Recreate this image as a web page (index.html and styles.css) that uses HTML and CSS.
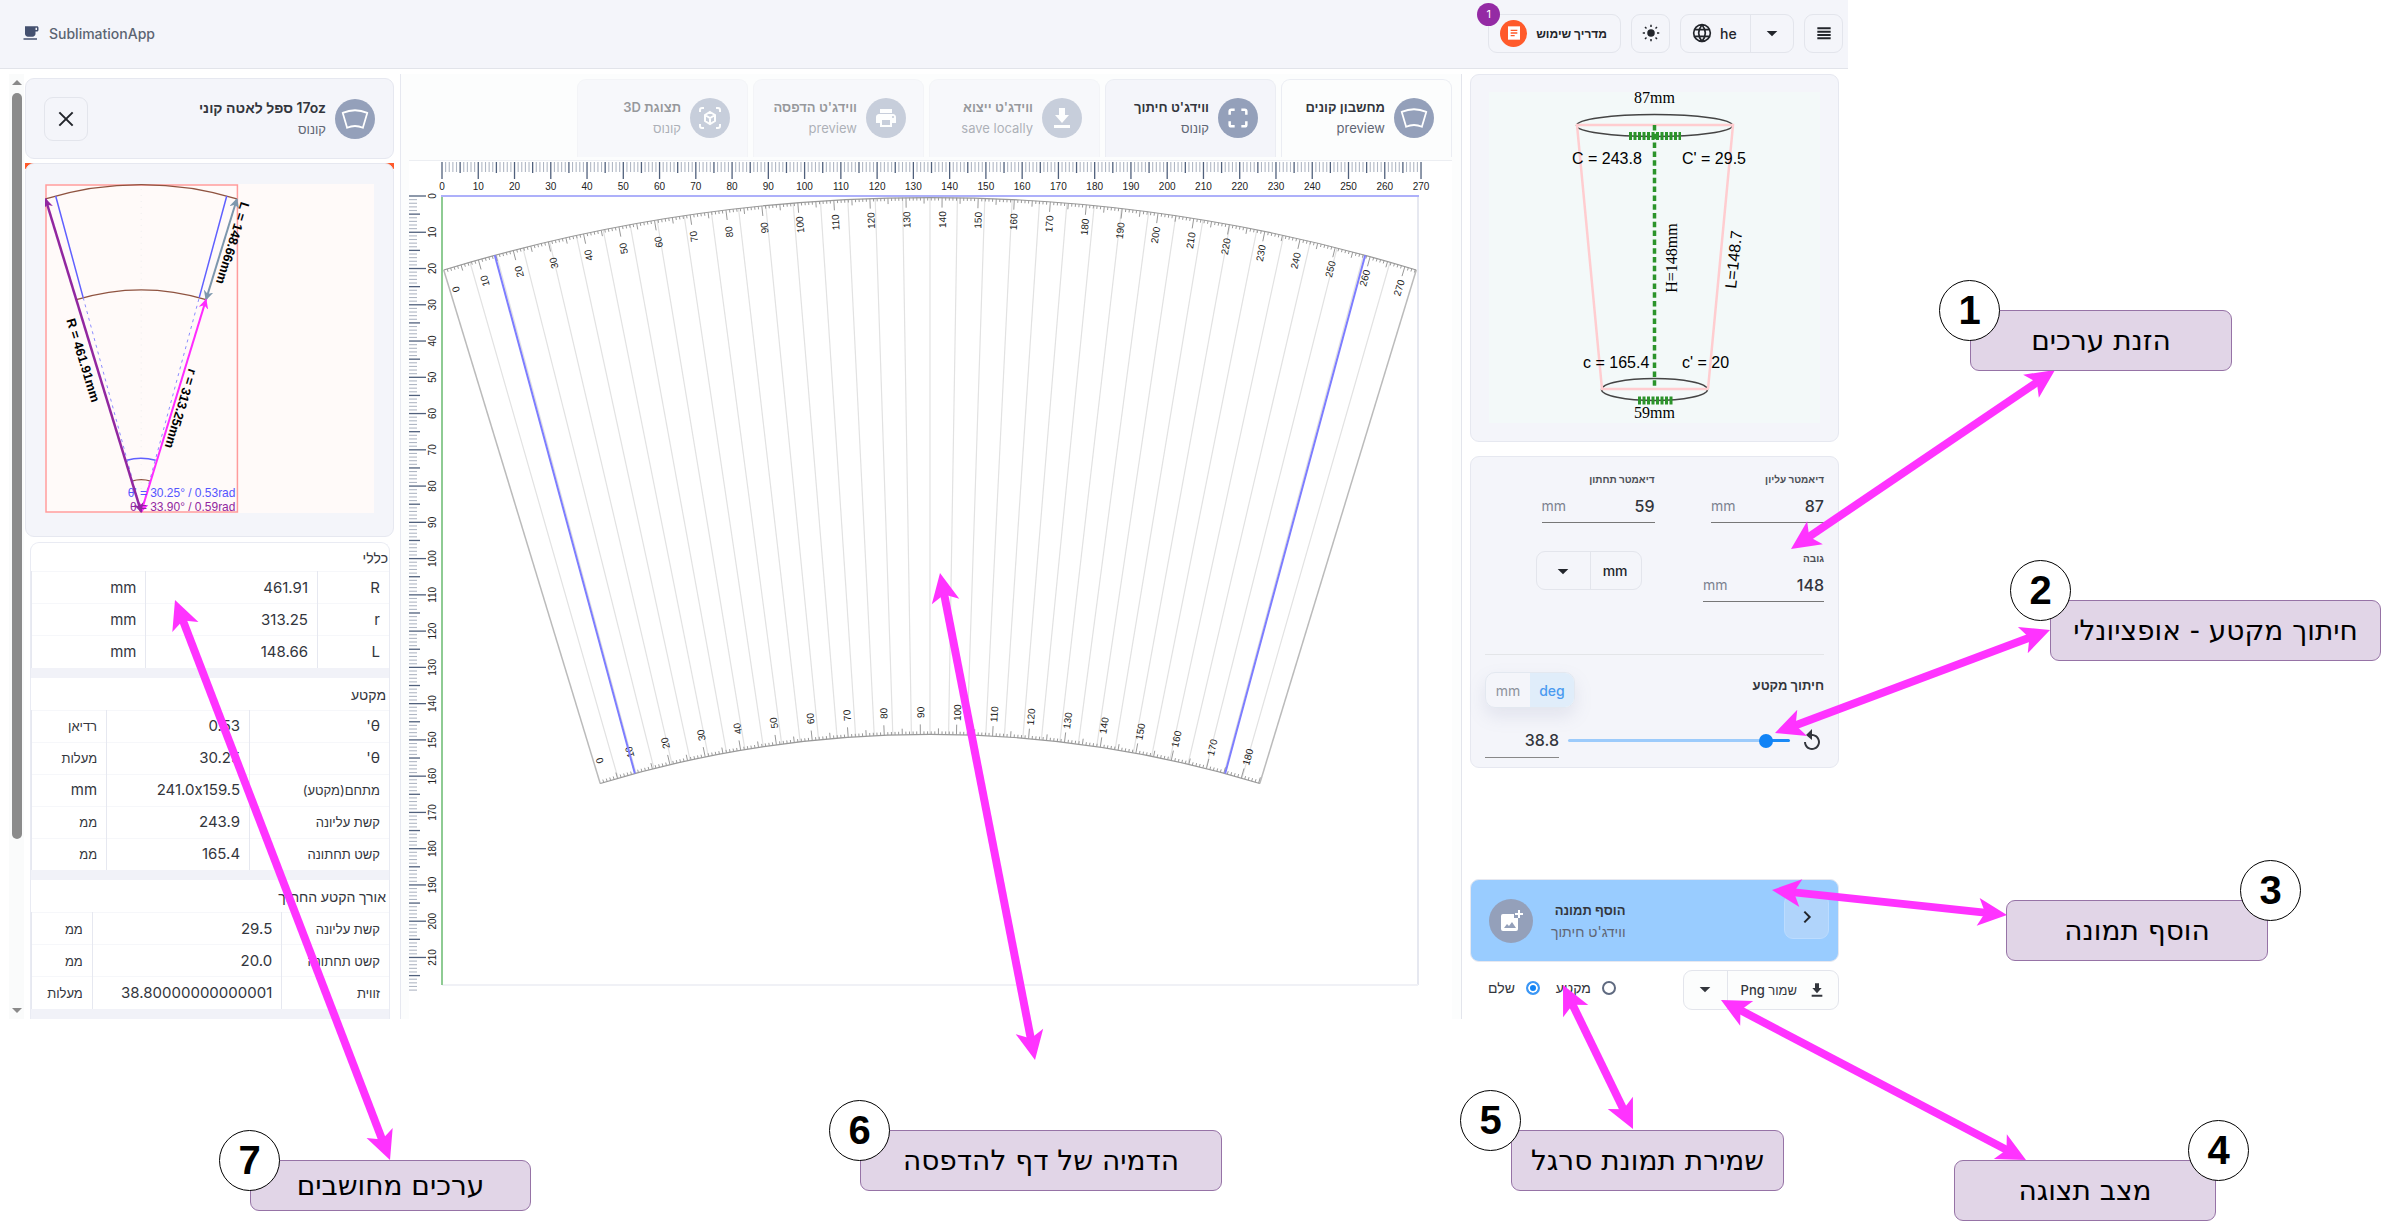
FILE: index.html
```html
<!DOCTYPE html>
<html lang="he">
<head>
    <meta charset="UTF-8">
    <meta name="viewport" content="width=device-width, initial-scale=1.0">
    <title>SublimationApp</title>
    <link rel="stylesheet" href="styles.css">
</head>
<body>

<!-- shared icons -->
<svg class="sprite" aria-hidden="true">
    <symbol id="i-cup" viewBox="0 0 24 24"><path d="M20 3H4v10c0 2.21 1.79 4 4 4h6c2.21 0 4-1.79 4-4v-3h2c1.11 0 2-.9 2-2V5c0-1.11-.89-2-2-2zm0 5h-2V5h2v3zM2 21h18v-2H2v2z"/></symbol>
    <symbol id="i-caret" viewBox="0 0 24 24"><path d="M4 9l8 8 8-8z"/></symbol>
    <symbol id="i-close" viewBox="0 0 24 24"><path class="line" d="M2 2l20 20M22 2L2 22"/></symbol>
    <symbol id="i-chevron" viewBox="0 0 24 24"><path class="line" d="M8 4l8 8-8 8"/></symbol>
    <symbol id="i-cone" viewBox="0 0 32 32"><path class="line" d="M2 9Q16 3 30 9L25 26Q16 22 7 26z"/></symbol>
    <symbol id="i-frame" viewBox="0 0 24 24"><path class="line" d="M2 8V4q0-2 2-2h4M16 2h4q2 0 2 2v4M22 16v4q0 2-2 2h-4M8 22H4q-2 0-2-2v-4"/></symbol>
    <symbol id="i-download" viewBox="0 0 24 24"><path d="M19 9h-4V2H9v7H5l7 8 7-8zM4 19v3h16v-3H4z"/></symbol>
    <symbol id="i-print" viewBox="0 0 24 24"><path d="M19 8H5c-1.66 0-3 1.34-3 3v6h4v4h12v-4h4v-6c0-1.66-1.34-3-3-3zm-3 11H8v-5h8v5zm3-7c-.55 0-1-.45-1-1s.45-1 1-1 1 .45 1 1-.45 1-1 1zm-1-9H6v4h12V3z"/></symbol>
    <symbol id="i-cube" viewBox="0 0 24 24"><path class="line" d="M2 6V4q0-2 2-2h2M18 2h2q2 0 2 2v2M22 18v2q0 2-2 2h-2M6 22H4q-2 0-2-2v-2M12 6l5 3v6l-5 3-5-3V9zM7 9l5 3 5-3M12 12v6"/></symbol>
    <symbol id="i-image" viewBox="0 0 24 24"><path d="M15 5H4q-2 0-2 2v13q0 2 2 2h13q2 0 2-2V9h-4zM5 19l3-4 2 2 3-4 4 6zM19 1h2v3h3v2h-3v3h-2V6h-3V4h3z"/></symbol>
    <symbol id="i-undo" viewBox="0 0 24 24"><path d="M12 5V0L6 6l6 5V7c3.31 0 6 2.69 6 6s-2.69 6-6 6-6-2.69-6-6H4c0 4.42 3.58 8 8 8s8-3.58 8-8-3.58-8-8-8z"/></symbol>
    <symbol id="i-globe" viewBox="0 0 24 24"><path class="line" d="M12 2a10 10 0 1 0 0 20a10 10 0 1 0 0-20M12 2q-8 10 0 20q8-10 0-20M3 8h18M3 16h18"/></symbol>
    <symbol id="i-sun" viewBox="0 0 24 24"><circle cx="12" cy="12" r="5"/><path class="line" d="M12 1v3M12 20v3M1 12h3M20 12h3M4 4l2 2M18 18l2 2M4 20l2-2M18 6l2-2"/></symbol>
    <symbol id="i-menu" viewBox="0 0 24 24"><path class="line" d="M2 5h20M2 10h20M2 15h20M2 20h20"/></symbol>
    <symbol id="i-guide" viewBox="0 0 24 24"><path d="M3 2h18v20H3z"/><path class="cut" d="M7 8h10M7 12h10M7 16h6"/></symbol>
</svg>

<div class="app">
    <header class="topbar">
        <a class="brand" href="#"><svg class="icon icon-18"><use href="#i-cup"/></svg>SublimationApp</a>
        <div class="topbar-tools">
            <button class="btn guide" dir="rtl">
                <span class="guide-label">מדריך שימוש</span>
                <span class="guide-icon"><svg class="icon icon-16"><use href="#i-guide"/></svg></span>
                <span class="badge">1</span>
            </button>
            <button class="btn square" aria-label="theme"><svg class="icon icon-18"><use href="#i-sun"/></svg></button>
            <label class="btn split lang">
                <svg class="icon icon-20"><use href="#i-globe"/></svg>
                <select aria-label="language"><option>he</option><option>en</option></select>
                <span class="split-caret"><svg class="icon icon-16"><use href="#i-caret"/></svg></span>
            </label>
            <button class="btn square" aria-label="menu"><svg class="icon icon-16"><use href="#i-menu"/></svg></button>
        </div>
    </header>

    <main class="workspace">
        <aside class="side-left">
            <div class="scrollbar"><i class="up"></i><i class="thumb"></i><i class="down"></i></div>
            <div class="side-content" dir="rtl">
                <div class="card title-card">
                    <span class="round"><svg class="icon icon-28"><use href="#i-cone"/></svg></span>
                    <div class="names"><b>17oz ספל לאטה קוני</b><span>קונוס</span></div>
                    <button class="btn close" aria-label="close"><svg class="icon icon-16"><use href="#i-close"/></svg></button>
                </div>

                <div class="sketch-wrap">
                    <div class="card sketch-card">
                        <svg class="sketch" viewBox="45 183 330 330" direction="ltr">
                            <defs>
                                <marker id="m-purple" viewBox="0 0 10 10" refX="9" refY="5" markerWidth="4" markerHeight="4" orient="auto-start-reverse"><path d="M0 0L10 5L0 10L3 5z" fill="#9127a0"/></marker>
                                <marker id="m-pink" viewBox="0 0 10 10" refX="9" refY="5" markerWidth="5" markerHeight="5" orient="auto-start-reverse"><path d="M0 0L10 5L0 10L3 5z" fill="#ff2bff"/></marker>
                                <marker id="m-slate" viewBox="0 0 10 10" refX="9" refY="5" markerWidth="5" markerHeight="5" orient="auto-start-reverse"><path d="M0 0L10 5L0 10L3 5z" fill="#7d97ad"/></marker>
                            </defs>
                            <rect x="45" y="183" width="330" height="330" fill="#fffaf9"/>
                            <rect x="46" y="184" width="192" height="328" fill="none" stroke="#ff9c9c" stroke-width="1.5"/>
                            <path d="M141.5 188V505" stroke="#eee" stroke-dasharray="1 5"/>
                            <path d="M45.5 198A329 329 0 0 1 237.5 198M76.500 299A223 223 0 0 1 206.500 299M132 481A32 32 0 0 1 151 481" fill="none" stroke="#8f5340" stroke-width="1.3"/>
                            <path d="M55.700 195L83.300 297M227.300 195L199.700 297M127 460Q141 456 156 460" fill="none" stroke="#6060ff" stroke-width="1.5"/>
                            <path d="M83.300 297L141.500 512L199.700 297" fill="none" stroke="#8c8cff" stroke-dasharray="3 4"/>
                            <path d="M237.500 198L206.500 299" stroke="#7d97ad" stroke-width="2" marker-start="url(#m-slate)" marker-end="url(#m-slate)"/>
                            <path d="M206.500 299L141.500 512" stroke="#ff2bff" stroke-width="2" marker-start="url(#m-pink)" marker-end="url(#m-pink)"/>
                            <g class="theta">
                                <text x="236" y="497" fill="#5555ff">θ' = 30.25° / 0.53rad</text>
                                <text x="236" y="511" fill="#9127a0">θ = 33.90° / 0.59rad</text>
                            </g>
                            <path d="M45.500 198L141.500 512" stroke="#9127a0" stroke-width="2.5" marker-start="url(#m-purple)" marker-end="url(#m-purple)"/>
                            <g class="side-label">
                                <text transform="translate(79 361) rotate(73)">R = 461.91mm</text>
                                <text transform="translate(177 407) rotate(107)">r = 313.25mm</text>
                                <text transform="translate(229 241) rotate(107)">L = 148.66mm</text>
                            </g>
                        </svg>
                    </div>
                </div>

                <div class="values">
                    <section>
                        <h3>כללי</h3>
                        <table class="cols-a">
                            <tr><td>R</td><td>461.91</td><td>mm</td></tr>
                            <tr><td>r</td><td>313.25</td><td>mm</td></tr>
                            <tr><td>L</td><td>148.66</td><td>mm</td></tr>
                        </table>
                    </section>
                    <section>
                        <h3>מקטע</h3>
                        <table class="cols-b">
                            <tr><td>θ'</td><td>0.53</td><td class="he">רדיאן</td></tr>
                            <tr><td>θ'</td><td>30.25</td><td class="he">מעלות</td></tr>
                            <tr><td class="he">מתחם(מקטע)</td><td>241.0x159.5</td><td>mm</td></tr>
                            <tr><td class="he">קשת עליונה</td><td>243.9</td><td class="he">ממ</td></tr>
                            <tr><td class="he">קשט תחתונה</td><td>165.4</td><td class="he">ממ</td></tr>
                        </table>
                    </section>
                    <section>
                        <h3>אורך הקטע החתוך</h3>
                        <table class="cols-c">
                            <tr><td class="he">קשת עליונה</td><td>29.5</td><td class="he">ממ</td></tr>
                            <tr><td class="he">קשט תחתונה</td><td>20.0</td><td class="he">ממ</td></tr>
                            <tr><td class="he">זווית</td><td>38.80000000000001</td><td class="he">מעלות</td></tr>
                        </table>
                    </section>
                </div>
            </div>
        </aside>

        <section class="stage">
            <nav class="tabs" dir="rtl">
                <button class="tab active"><span class="round"><svg class="icon icon-28"><use href="#i-cone"/></svg></span><span class="names"><b>מחשבון קונים</b><span>preview</span></span></button>
                <button class="tab"><span class="round"><svg class="icon icon-20"><use href="#i-frame"/></svg></span><span class="names"><b>ווידג'ט חיתוך</b><span>קונוס</span></span></button>
                <button class="tab off" disabled><span class="round"><svg class="icon icon-24"><use href="#i-download"/></svg></span><span class="names"><b>ווידג'ט ייצוא</b><span>save locally</span></span></button>
                <button class="tab off" disabled><span class="round"><svg class="icon icon-24"><use href="#i-print"/></svg></span><span class="names"><b>ווידג'ט הדפסה</b><span>preview</span></span></button>
                <button class="tab off" disabled><span class="round"><svg class="icon icon-24"><use href="#i-cube"/></svg></span><span class="names"><b>תצוגת 3D</b><span>קונוס</span></span></button>
            </nav>
            <svg class="board" id="board" viewBox="409 160 1043 858"></svg>
        </section>

        <aside class="side-right" dir="rtl">
            <div class="card cup-card">
                <svg class="cup" viewBox="1489 92 331 331" direction="ltr">
                    <rect x="1489" y="92" width="331" height="331" fill="#f3f9f9"/>
                    <g fill="none" stroke="#444" stroke-width="1.5">
                        <ellipse cx="1654.500" cy="125.500" rx="78" ry="11"/>
                        <ellipse cx="1654.500" cy="389.500" rx="53" ry="11"/>
                    </g>
                    <path d="M1708 389L1733 125H1577L1602 389H1708" fill="none" stroke="#ffcdd0" stroke-width="2.5"/>
                    <path d="M1654.500 125V387" stroke="#2b942b" stroke-width="3.500" stroke-dasharray="5.500 3.300"/>
                    <path d="M1629 136H1681M1638 400.500H1673" stroke="#2b942b" stroke-width="8" stroke-dasharray="3 1.500"/>
                    <g class="cup-serif">
                        <text x="1654.500" y="103">87mm</text>
                        <text x="1654.500" y="418">59mm</text>
                        <text transform="translate(1677 258) rotate(-90)">H=148mm</text>
                    </g>
                    <g class="cup-sans">
                        <text x="1572" y="164">C = 243.8</text>
                        <text x="1682" y="164">C' = 29.5</text>
                        <text x="1583" y="368">c = 165.4</text>
                        <text x="1682" y="368">c' = 20</text>
                        <text transform="translate(1736 289) rotate(-84)">L=148.7</text>
                    </g>
                </svg>
            </div>

            <form class="card form-card">
                <div class="fields">
                    <div class="field">
                        <label for="top">דיאמטר עליון</label>
                        <div class="input-row"><input id="top" type="text" value="87"><span>mm</span></div>
                    </div>
                    <div class="field">
                        <label for="bottom">דיאמטר תחתון</label>
                        <div class="input-row"><input id="bottom" type="text" value="59"><span>mm</span></div>
                    </div>
                    <div class="field wide">
                        <label for="height">גובה</label>
                        <div class="input-row"><input id="height" type="text" value="148"><span>mm</span></div>
                    </div>
                    <label class="btn split unit">
                        <select aria-label="unit"><option>mm</option><option>inch</option></select>
                        <span class="split-caret"><svg class="icon icon-16"><use href="#i-caret"/></svg></span>
                    </label>
                </div>
                <div class="cut-head">
                    <label for="cut">חיתוך מקטע</label>
                    <div class="toggle" dir="ltr"><button type="button">mm</button><button type="button" class="on">deg</button></div>
                </div>
                <div class="cut-row">
                    <button type="button" class="undo" aria-label="reset"><svg class="icon icon-24"><use href="#i-undo"/></svg></button>
                    <input id="cut" class="slider" type="range" min="0" max="100" value="8">
                    <input class="angle" type="text" value="38.8" aria-label="angle">
                </div>
            </form>

            <div class="card add-card" dir="ltr">
                <span class="round"><svg class="icon icon-24"><use href="#i-image"/></svg></span>
                <div class="names" dir="rtl"><b>הוסף תמונה</b><span>ווידג'ט חיתוך</span></div>
                <button class="btn go" aria-label="open"><svg class="icon icon-16"><use href="#i-chevron"/></svg></button>
            </div>

            <div class="bottom-row">
                <div class="save">
                    <button class="save-main"><svg class="icon icon-16"><use href="#i-download"/></svg>שמור Png</button>
                    <button class="save-more" aria-label="format"><svg class="icon icon-16"><use href="#i-caret"/></svg></button>
                </div>
                <div class="radios">
                    <label><input type="radio" name="view">מקטע</label>
                    <label><input type="radio" name="view" checked>שלם</label>
                </div>
            </div>
        </aside>
    </main>
</div>

<!-- help callouts -->
<svg class="arrows" id="arrows" aria-hidden="true"></svg>
<div class="callout c1" dir="rtl">הזנת ערכים<b>1</b></div>
<div class="callout c2" dir="rtl">חיתוך מקטע - אופציונלי<b>2</b></div>
<div class="callout c3" dir="rtl">הוסף תמונה<b>3</b></div>
<div class="callout c4" dir="rtl">מצב תצוגה<b>4</b></div>
<div class="callout c5" dir="rtl">שמירת תמונת סרגל<b>5</b></div>
<div class="callout c6" dir="rtl">הדמיה של דף להדפסה<b>6</b></div>
<div class="callout c7" dir="rtl">ערכים מחושבים<b>7</b></div>

<script src="script.js"></script>
</body>
</html>
```
FILE: styles.css
```css
* {
    margin: 0;
    padding: 0;
    box-sizing: border-box;
}

body {
    position: relative;
    min-height: 100vh;
    background: #fff;
    font-family: Inter, "Liberation Sans", sans-serif;
    font-size: 14px;
    color: #33363d;
    overflow: hidden;
}

button, input, select {
    font: inherit;
    color: inherit;
    background: none;
    border: none;
    outline: none;
}

.sprite {
    position: absolute;
    width: 0;
    height: 0;
}

.icon {
    fill: currentColor;
    flex: none;
}

.icon-16 { width: 16px; height: 16px; }
.icon-18 { width: 18px; height: 18px; }
.icon-20 { width: 20px; height: 20px; }
.icon-24 { width: 24px; height: 24px; }
.icon-28 { width: 28px; height: 28px; }

.line {
    fill: none;
    stroke: currentColor;
    stroke-width: 3;
}

#i-cone .line, #i-cube .line, #i-globe .line, #i-sun .line {
    stroke-width: 2;
}

.cut {
    fill: none;
    stroke: #ff5a2b;
    stroke-width: 2;
}

.app {
    width: calc(100% - 533px);
}

/* top bar */
.topbar {
    display: flex;
    justify-content: space-between;
    align-items: center;
    height: 69px;
    padding: 0 5px 2px 22px;
    background: #f4f5fa;
    border-bottom: 1px solid #e2e4ea;
}

.brand {
    display: flex;
    align-items: center;
    gap: 9px;
    color: #5b6472;
    font-weight: 500;
    text-decoration: none;
}

.brand .icon {
    color: #44506f;
}

.topbar-tools {
    display: flex;
    gap: 10px;
}

.btn {
    display: flex;
    align-items: center;
    justify-content: center;
    height: 39px;
    border: 1px solid #e3e5ec;
    border-radius: 9px;
    color: #22252b;
}

.square {
    width: 39px;
}

.guide {
    position: relative;
    gap: 9px;
    padding: 0 13px 0 11px;
    font-weight: bold;
}

.guide-label {
    font-size: 12px;
}

.guide-icon {
    display: flex;
    align-items: center;
    justify-content: center;
    width: 27px;
    height: 27px;
    border-radius: 50%;
    background: #ff5a2b;
    color: #fff;
}

.badge {
    position: absolute;
    left: -12px;
    top: -12px;
    width: 23px;
    height: 23px;
    border-radius: 50%;
    background: #942aa4;
    color: #fff;
    font-size: 11px;
    font-weight: normal;
    line-height: 23px;
}

.split select {
    appearance: none;
    cursor: pointer;
}

.split-caret {
    display: flex;
    align-items: center;
    justify-content: center;
    width: 43px;
    height: 100%;
    border-left: 1px solid #e3e5ec;
}

.lang {
    gap: 8px;
    padding-left: 11px;
}

.lang select {
    width: 22px;
    font-weight: 500;
}

/* layout */
.workspace {
    display: grid;
    grid-template-columns: 401px 1fr 387px;
    padding-top: 5px;
}

.card {
    background: #f4f5fa;
    border: 1px solid #e6e8f0;
    border-radius: 9px;
}

.round {
    display: flex;
    align-items: center;
    justify-content: center;
    flex: none;
    width: 40px;
    height: 40px;
    border-radius: 50%;
    background: #94a0ba;
    color: #fff;
}

.names {
    display: flex;
    flex-direction: column;
    gap: 3px;
    line-height: 18px;
    text-align: start;
    white-space: nowrap;
}

.names b {
    font-size: 13px;
    font-weight: 600;
}

.names span {
    color: #5f6574;
    font-size: 13px;
}

/* left panel */
.side-left {
    display: flex;
    gap: 1px;
    padding: 0 6px 0 9px;
    border-right: 1px solid #e6e8f0;
}

.scrollbar {
    display: flex;
    flex-direction: column;
    align-items: center;
    width: 15px;
    padding: 6px 0;
    background: #fafbfb;
}

.scrollbar .up, .scrollbar .down {
    border: 5px solid transparent;
    border-top-width: 0;
    border-bottom-color: #8a8a8a;
}

.scrollbar .down {
    border-top: 5px solid #8a8a8a;
    border-bottom-width: 0;
}

.scrollbar .thumb {
    flex: 0 0 746px;
    width: 10px;
    margin: 8px 0 auto;
    border-radius: 5px;
    background: #8b8b8b;
}

.side-content {
    flex: 1;
    padding-top: 4px;
}

.title-card {
    display: flex;
    align-items: center;
    gap: 9px;
    height: 81px;
    padding: 0 18px;
}

.title-card b {
    font-size: 14px;
}

.close {
    width: 44px;
    height: 44px;
    margin-right: auto;
}

.sketch-wrap {
    margin-top: 4px;
    background: linear-gradient(#ff5a2b 6px, transparent 6px);
}

.sketch-card {
    padding: 20px 19px 23px;
}

.sketch {
    display: block;
    width: 100%;
}

.sketch text, .board text {
    font-family: "Liberation Sans", Arial, sans-serif;
}

.side-label text {
    font-size: 13px;
    font-weight: bold;
    text-anchor: middle;
}

.theta text {
    font-size: 12px;
    text-anchor: end;
}

.values {
    margin: 5px 4px 0 5px;
    border: 1px solid #e9ebf3;
    border-bottom: none;
    border-radius: 9px 9px 0 0;
}

.values section {
    border-bottom: 10px solid #f1f2f8;
}

.values h3 {
    padding: 6px 3px 4px;
    font-size: 14px;
    line-height: 22px;
    font-weight: 500;
}

.values section:first-child h3 {
    padding: 4px 1px 2px;
}

.values table {
    width: 100%;
    table-layout: fixed;
    border-collapse: collapse;
}

.values td {
    height: 32px;
    padding: 0 9px;
    border-top: 1px solid #f6f7fa;
    border-left: 1px solid #e6e8f0;
    font-size: 15px;
    line-height: 20px;
}

.values .he {
    font-size: 13px;
}

.cols-a td:nth-child(1) { width: 20%; }
.cols-a td:nth-child(2) { width: 48%; }
.cols-b td:nth-child(1) { width: 39%; }
.cols-b td:nth-child(2) { width: 40%; }
.cols-c td:nth-child(1) { width: 30%; }
.cols-c td:nth-child(2) { width: 53%; }

/* stage */
.stage {
    padding: 5px 9px 0 8px;
    background: #fcfdfd;
}

.tabs {
    display: flex;
    gap: 5px;
}

.tab {
    display: flex;
    gap: 9px;
    width: 171px;
    height: 78px;
    padding: 18px 17px 0;
    background: #f4f5fa;
    border: 1px solid #ebedf3;
    border-bottom: none;
    border-radius: 9px 9px 0 0;
}

.tab.active {
    background: #fcfdfd;
}

.tab.off {
    opacity: 0.5;
}

.board {
    display: block;
    width: 100%;
    margin-top: 3px;
    background: #fff;
    border-top: 1px solid #eceef2;
}

.board text {
    font-size: 10px;
    text-anchor: middle;
    fill: #222;
}

/* right panel */
.side-right {
    display: flex;
    flex-direction: column;
    padding: 0 9px 0 8px;
    border-left: 1px solid #e3e5ec;
}

.cup-card {
    padding: 17px 18px 18px;
}

.cup {
    display: block;
    width: 100%;
}

.cup-serif text {
    font-family: "Liberation Serif", "Times New Roman", serif;
    font-size: 16px;
    text-anchor: middle;
}

.cup-sans text {
    font-family: "Liberation Sans", Arial, sans-serif;
    font-size: 16px;
}

.form-card {
    height: 312px;
    margin-top: 14px;
    padding: 15px 14px;
}

.fields {
    display: grid;
    grid-template-columns: 1fr 1fr;
    row-gap: 28px;
    height: 183px;
    align-content: start;
    border-bottom: 1px solid #e3e5e8;
}

.field {
    width: 113px;
}

.field.wide {
    width: 121px;
}

.field label {
    display: block;
    font-size: 10px;
    font-weight: bold;
    line-height: 14px;
    color: #4b4e55;
}

.input-row {
    display: flex;
    align-items: center;
    height: 37px;
    padding-top: 3px;
    border-bottom: 1px solid #777;
}

.input-row input {
    flex: 1;
    width: 0;
    font-size: 16px;
    font-weight: 500;
}

.input-row span {
    color: #7c8290;
}

.unit {
    width: 106px;
    margin-right: 13px;
    justify-self: start;
    align-self: start;
    font-weight: 500;
}

.unit select {
    flex: 1;
    padding-right: 13px;
}

.unit .split-caret {
    width: 54px;
    border-left: none;
    border-right: 1px solid #e3e5ec;
}

.cut-head {
    display: flex;
    justify-content: space-between;
    margin-top: 17px;
}

.cut-head label {
    padding-top: 5px;
    font-size: 13px;
    font-weight: bold;
}

.toggle {
    display: flex;
    height: 36px;
    border: 1px solid #e3e8f0;
    border-radius: 10px;
    overflow: hidden;
    box-shadow: 0 8px 18px rgba(120, 130, 170, 0.15);
}

.toggle button {
    width: 44px;
    color: #8d929c;
}

.toggle .on {
    background: #e0edfa;
    color: #4a9af0;
    font-weight: 500;
}

.cut-row {
    display: flex;
    align-items: center;
    gap: 9px;
    margin-top: 15px;
}

.undo {
    display: flex;
    margin-left: 1px;
}

.slider {
    appearance: none;
    flex: 1;
    min-width: 0;
    height: 3px;
    border-radius: 2px;
    background: linear-gradient(to left, #1a8af6 12%, #9ccbfb 12%);
}

.slider::-webkit-slider-thumb {
    appearance: none;
    width: 14px;
    height: 14px;
    border-radius: 50%;
    background: #1183f5;
}

.angle {
    width: 74px;
    height: 35px;
    border-bottom: 1px solid #888;
    font-size: 16px;
    font-weight: 500;
}

.add-card {
    display: flex;
    align-items: center;
    gap: 18px;
    height: 83px;
    margin-top: 111px;
    padding: 0 9px 0 18px;
    background: #99ccff;
}

.add-card .round {
    width: 44px;
    height: 44px;
}

.add-card .names {
    gap: 4px;
}

.add-card .names span {
    font-size: 14px;
}

.go {
    width: 45px;
    height: 45px;
    margin-left: auto;
    margin-bottom: 8px;
    background: #b0d4fb;
    border-color: #bcdcff;
}

.bottom-row {
    display: flex;
    justify-content: space-between;
    margin-top: 8px;
}

.save {
    display: flex;
    height: 40px;
    border: 1px solid #e3e5ec;
    border-radius: 9px;
    background: #fcfdfd;
}

.save-main {
    display: flex;
    align-items: center;
    gap: 12px;
    padding: 0 13px;
    font-size: 13px;
    font-weight: 500;
}

.save-more {
    width: 44px;
    border-right: 1px solid #e3e5ec;
}

.radios {
    display: flex;
    gap: 16px;
    align-items: flex-start;
    padding: 9px 0 0 18px;
}

.radios label {
    display: flex;
    align-items: center;
    gap: 11px;
    font-weight: 500;
}

.radios input {
    appearance: none;
    width: 14px;
    height: 14px;
    border: 2px solid #5f6a80;
    border-radius: 50%;
}

.radios input:checked {
    border-color: #3c97f5;
    background: #1183f5;
    box-shadow: inset 0 0 0 2px #fff;
}

/* help callouts */
.arrows {
    position: absolute;
    left: 0;
    top: 0;
    width: 100%;
    height: 100%;
    pointer-events: none;
}

.callout {
    position: absolute;
    display: flex;
    align-items: center;
    justify-content: center;
    width: 262px;
    height: 61px;
    background: #e1d5e7;
    border: 1px solid #9673a6;
    border-radius: 9px;
    color: #000;
    font-family: "DejaVu Sans", sans-serif;
    font-size: 28px;
    white-space: nowrap;
}

.callout b {
    position: absolute;
    left: -32px;
    top: -31px;
    width: 61px;
    height: 61px;
    border: 1px solid #000;
    border-radius: 50%;
    background: #fff;
    font-family: "Liberation Sans", Arial, sans-serif;
    font-size: 40px;
    line-height: 58px;
    text-align: center;
}

.c1 { left: 1970px; top: 310px; }
.c2 { left: 2050px; top: 600px; width: 331px; }
.c3 { left: 2006px; top: 900px; }
.c4 { left: 1954px; top: 1160px; }
.c5 { left: 1511px; top: 1130px; width: 273px; }
.c6 { left: 860px; top: 1130px; width: 362px; }
.c7 { left: 250px; top: 1160px; width: 281px; height: 51px; }

.c2 b {
    left: -41px;
    top: -41px;
}

.c3 b, .c4 b {
    left: auto;
    right: -34px;
    top: -41px;
}

.c5 b {
    left: -52px;
    top: -41px;
}
```
FILE: script.js
```js
const NS = 'http://www.w3.org/2000/svg';

function add(parent, tag, attrs, text) {
    const el = document.createElementNS(NS, tag);
    for (const key in attrs) el.setAttribute(key, attrs[key]);
    if (text !== undefined) el.textContent = text;
    parent.appendChild(el);
    return el;
}

// page rulers
const board = document.getElementById('board');
const X0 = 442, Y0 = 195, MM = 3.626;

function line(x1, y1, x2, y2, stroke, width) {
    add(board, 'line', { x1, y1, x2, y2, stroke, 'stroke-width': width });
}

for (let i = 0; i <= 270; i++) {
    const x = X0 + i * MM;
    const end = i % 10 === 0 ? 178 : i % 5 === 0 ? 172 : 171;
    line(x, 161, x, end, i % 5 === 0 ? '#50607c' : '#b0b7c4', i % 5 === 0 ? 1.3 : 1.1);
    if (i % 10 === 0) add(board, 'text', { x, y: 189 }, i);
}
for (let i = 0; i <= 219; i++) {
    const y = Y0 + i * MM;
    const end = i % 10 === 0 ? 426 : i % 5 === 0 ? 420 : 417;
    line(409, y, end, y, i % 5 === 0 ? '#50607c' : '#b0b7c4', i % 5 === 0 ? 1.3 : 1.1);
    if (i % 10 === 0 && i <= 210) add(board, 'text', { transform: `translate(436 ${y}) rotate(-90)` }, i);
}

// page frame
line(1418, 195, 1418, 984, '#e6e8f0', 2);
line(442, 984, 1418, 984, '#f0f1f6', 2);
line(442, 195, 442, 984, '#8ecb93', 2);

// unrolled cone
const SCALE = 3.611, CX = 930, CY = 1864.5;
const R = 461.91, r = 313.25, HALF = 16.95 * Math.PI / 180, CUT = 15.125 * Math.PI / 180;

function at(radius, a) {
    return [CX + radius * Math.sin(a), CY - radius * Math.cos(a)];
}

function radial(r1, r2, a, stroke, width) {
    const p = at(r1, a), q = at(r2, a);
    line(p[0], p[1], q[0], q[1], stroke, width);
}

const R1 = R * SCALE, R2 = r * SCALE;
for (let i = 1; i < 36; i++) {
    radial(R1, R2, -HALF + i * HALF / 18, '#e2e2e2', 1.2);
}
radial(R1, R2, -HALF, '#bbb', 1.5);
radial(R1, R2, HALF, '#bbb', 1.5);

function arcRuler(mm, px, dir) {
    const p = at(px, -HALF), q = at(px, HALF);
    add(board, 'path', { d: `M${p} A${px} ${px} 0 0 1 ${q}`, fill: 'none', stroke: '#999', 'stroke-width': 1.2 });
    for (let i = 0; i <= mm * HALF * 2; i++) {
        const a = -HALF + i / mm;
        const len = i % 10 === 0 ? 10 : i % 5 === 0 ? 6 : 3;
        if (i > 0) radial(px, px + dir * len, a, '#999', 1);
        if (i % 10 === 0) {
            const t = at(px + dir * 22, i === 0 ? a + 1.5 / mm : a);
            const deg = a * 180 / Math.PI - 90;
            add(board, 'text', { transform: `translate(${t}) rotate(${deg})`, dy: 4 }, i);
        }
    }
}
arcRuler(R, R1, -1);
arcRuler(r, R2, 1);
radial(R1, R2, -CUT, '#7d7dff', 2);
radial(R1, R2, CUT, '#7d7dff', 2);
line(441, 195, 1419, 195, '#adb0fa', 2);

// callout arrows: [x1, y1, x2, y2]
const arrows = document.getElementById('arrows');
const links = [
    [1791, 549, 2055, 370],
    [1775, 733, 2050, 630],
    [1772, 890, 2007, 915],
    [1721, 1000, 2026, 1160],
    [1563, 985, 1633, 1129],
    [940, 573, 1035, 1060],
    [175, 600, 390, 1160]
];

function head(x, y, a) {
    add(arrows, 'path', {
        d: 'M0 0L-29 14L-22 0L-29 -14z',
        fill: '#ff33ff',
        transform: `translate(${x} ${y}) rotate(${a * 180 / Math.PI})`
    });
}

links.forEach(([x1, y1, x2, y2]) => {
    const a = Math.atan2(y2 - y1, x2 - x1);
    const dx = 20 * Math.cos(a), dy = 20 * Math.sin(a);
    add(arrows, 'line', { x1: x1 + dx, y1: y1 + dy, x2: x2 - dx, y2: y2 - dy, stroke: '#ff33ff', 'stroke-width': 8 });
    head(x2, y2, a);
    head(x1, y1, a + Math.PI);
});
```
